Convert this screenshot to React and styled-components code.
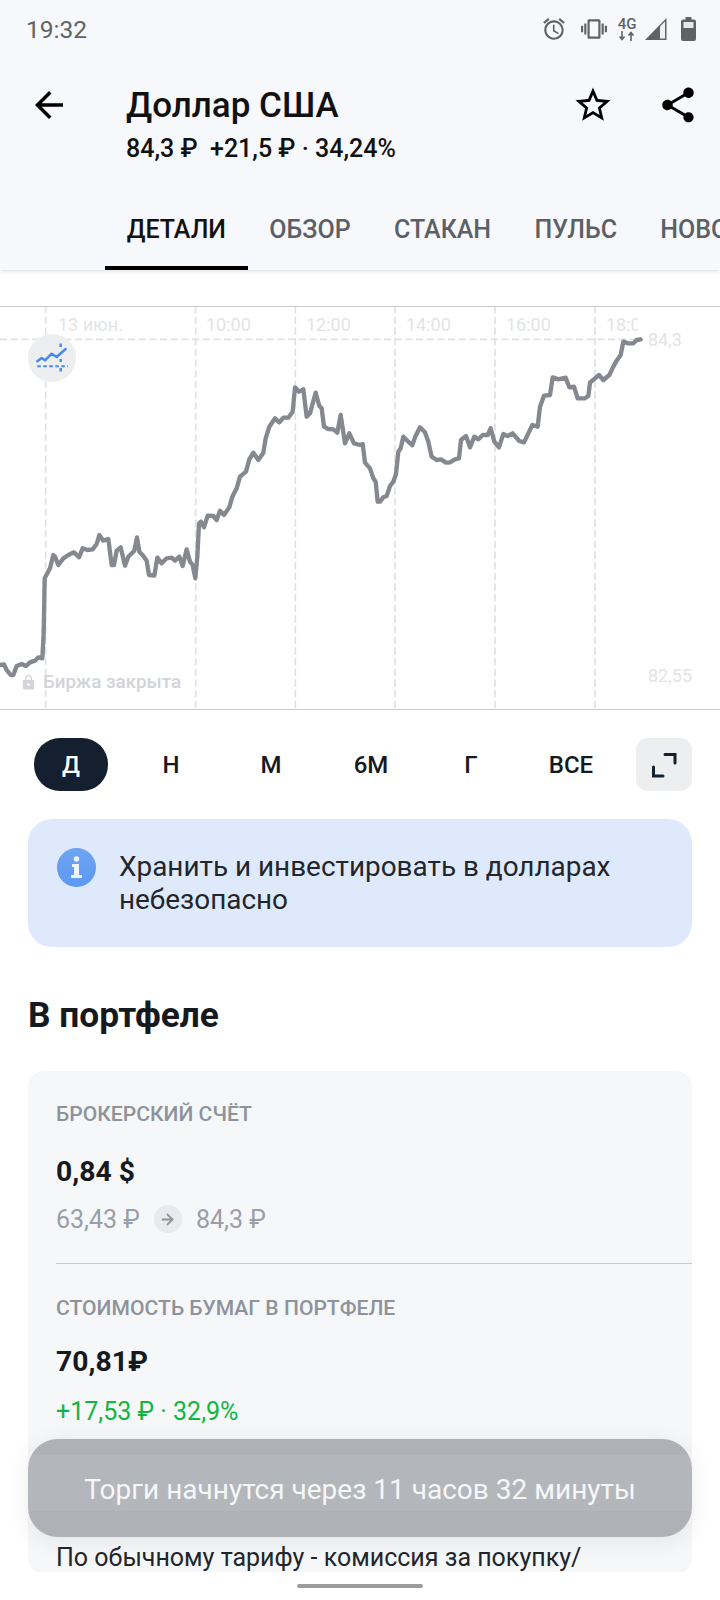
import React from "react";
import styled, { createGlobalStyle } from "styled-components";
import { MdArrowBack, MdStarBorder, MdShare, MdAccessAlarm, MdVibration, MdLock } from "react-icons/md";
import { ArrowRight } from "lucide-react";

const GlobalStyle = createGlobalStyle`
  html, body {
    margin: 0;
    padding: 0;
    background: #fff;
  }
  body {
    font-family: Roboto, "Noto Sans", sans-serif;
    color: #16191d;
  }
`;

const Page = styled.div`
  position: relative;
  display: flex;
  flex-direction: column;
  width: 720px;
  height: 1600px;
  overflow: hidden;
  background: #fff;
`;

const Header = styled.header`
  flex: none;
  height: 270px;
  background: #f6f8fb;
  box-shadow: 0 1px 4px rgba(0, 0, 0, 0.14);
`;

const StatusBar = styled.div`
  display: flex;
  align-items: center;
  justify-content: space-between;
  height: 58px;
  padding: 0 24px 0 26px;
  color: #5f6368;
`;

const Time = styled.span`
  font-size: 24.5px;
`;

const StatusIcons = styled.div`
  display: flex;
  align-items: center;
  height: 24px;
`;

const NetworkLabel = styled.div`
  display: flex;
  flex-direction: column;
  align-items: center;
  width: 20px;
  margin: 0 8px 0 10px;
  font-size: 15px;
  line-height: 14px;
  font-weight: 500;
  svg {
    display: block;
  }
`;

const BatterySlot = styled.div`
  display: flex;
  margin-left: 14px;
`;

const VibrateSlot = styled.div`
  display: flex;
  margin-left: 14px;
`;

const TitleBar = styled.div`
  display: flex;
  align-items: flex-start;
  height: 132px;
  padding: 26px 21px 0 28px;
  box-sizing: border-box;
`;

const IconButton = styled.div`
  display: flex;
  flex: none;
  align-items: center;
  justify-content: center;
  width: 42px;
  height: 42px;
  color: #000;
`;

const TitleBlock = styled.div`
  flex: 1;
  margin-left: 56px;
  padding-top: 1px;
`;

const Title = styled.div`
  font-size: 35px;
  line-height: 42px;
  font-weight: 500;
  color: #111;
`;

const Subtitle = styled.div`
  margin-top: 6px;
  font-size: 25px;
  line-height: 32px;
  font-weight: 500;
  color: #111;
  white-space: pre;
`;

const RightActions = styled.div`
  display: flex;
  gap: 43px;
`;

const Tabs = styled.nav`
  display: flex;
  height: 80px;
  padding-left: 105px;
  overflow: hidden;
`;

const Tab = styled.div`
  flex: none;
  display: flex;
  align-items: center;
  padding: 3px 21.7px 0;
  box-sizing: border-box;
  font-size: 25px;
  font-weight: 500;
  color: ${(p) => (p.$active ? "#111" : "#5b6067")};
  border-bottom: 4px solid ${(p) => (p.$active ? "#000" : "transparent")};
`;

const Content = styled.main`
  flex: 1;
  min-height: 0;
  overflow: hidden;
`;

const Chart = styled.section`
  position: relative;
  height: 404px;
  margin-top: 36px;
  overflow: hidden;
  svg.plot {
    position: absolute;
    left: 0;
    top: 0;
  }
`;

const AxisLabel = styled.span`
  position: absolute;
  left: ${(p) => p.$x}px;
  top: ${(p) => p.$y}px;
  max-width: ${(p) => p.$maxWidth || 80}px;
  overflow: hidden;
  font-size: 18px;
  line-height: 22px;
  white-space: nowrap;
  color: #e3e4e6;
`;

const ModeButton = styled.div`
  position: absolute;
  left: 28px;
  top: 28px;
  width: 48px;
  height: 48px;
  border-radius: 50%;
  background: #eceef0;
  svg {
    display: block;
  }
`;

const ClosedNote = styled.div`
  position: absolute;
  left: 20px;
  top: 364px;
  display: flex;
  align-items: center;
  gap: 6px;
  height: 24px;
  font-size: 18.8px;
  font-weight: 500;
  color: #d2d4d8;
`;

const Periods = styled.div`
  display: flex;
  align-items: center;
  height: 53px;
  margin-top: 28px;
  padding-left: 21px;
`;

const PeriodCell = styled.div`
  display: flex;
  justify-content: center;
  width: 100px;
`;

const PeriodButton = styled.div`
  display: flex;
  align-items: center;
  justify-content: center;
  width: 74px;
  height: 53px;
  padding-top: 1px;
  box-sizing: border-box;
  border-radius: 26px;
  font-size: 24px;
  font-weight: 500;
  background: ${(p) => (p.$active ? "#14202f" : "transparent")};
  color: ${(p) => (p.$active ? "#fff" : "#16191d")};
`;

const ExpandButton = styled.div`
  display: flex;
  align-items: center;
  justify-content: center;
  width: 56px;
  height: 53px;
  margin-left: 15px;
  border-radius: 12px;
  background: #eceef0;
`;

const Banner = styled.div`
  display: flex;
  gap: 23px;
  height: 128px;
  margin: 28px 28px 0;
  padding: 29px 29px 0;
  box-sizing: border-box;
  border-radius: 24px;
  background: #dfe9fc;
`;

const BannerText = styled.div`
  margin-top: 2px;
  font-size: 27.9px;
  line-height: 33px;
  white-space: nowrap;
  color: #22262b;
`;

const Heading = styled.h2`
  margin: 48px 28px 36px;
  font-size: 35.3px;
  line-height: 40px;
  font-weight: 700;
  color: #16191d;
`;

const Card = styled.section`
  margin: 0 28px;
  padding-left: 28px;
  border-radius: 16px;
  background: #f5f7f9;
`;

const Block = styled.div`
  padding: ${(p) => p.$top}px 0 ${(p) => p.$bottom}px;
  border-top: ${(p) => (p.$divided ? "1px solid #c9cbd0" : "none")};
`;

const Caption = styled.div`
  font-size: 21.1px;
  line-height: 26px;
  font-weight: 500;
  color: #8e939b;
`;

const Amount = styled.div`
  margin-top: ${(p) => p.$gap}px;
  font-size: 28.3px;
  line-height: 34px;
  font-weight: 700;
  color: #16191d;
`;

const PriceRow = styled.div`
  display: flex;
  align-items: center;
  height: 28px;
  margin-top: 16px;
  font-size: 25px;
  color: #9a9ea6;
`;

const ArrowBadge = styled.span`
  display: flex;
  align-items: center;
  justify-content: center;
  width: 28px;
  height: 28px;
  margin: 0 14px 0 14px;
  border-radius: 50%;
  background: #e8eaed;
  color: #8e939b;
`;

const Profit = styled.div`
  margin-top: 17px;
  font-size: 25px;
  line-height: 32px;
  color: #11b53f;
`;

const Description = styled.div`
  margin-top: 113px;
  font-size: 25px;
  line-height: 33px;
  white-space: nowrap;
  color: #22262b;
`;

const HomeBar = styled.div`
  flex: none;
  display: flex;
  align-items: center;
  justify-content: center;
  height: 28px;
  background: #fff;
`;

const HomeIndicator = styled.div`
  width: 126px;
  height: 4px;
  border-radius: 2px;
  background: #9c9c9c;
`;

const Toast = styled.div`
  position: absolute;
  left: 28px;
  right: 28px;
  bottom: 63px;
  display: flex;
  align-items: center;
  justify-content: center;
  height: 98px;
  padding-top: 3px;
  box-sizing: border-box;
  border-radius: 30px;
  background: linear-gradient(#aeb1b6 16px, #b3b6bb 16px, #b3b6bb 72px, #aeb1b6 72px);
  box-shadow: 0 4px 24px rgba(0, 0, 0, 0.08);
  font-size: 28px;
  color: #f6f7f8;
`;

const gridX = [137, 587, 886, 1185, 1485, 1785];

const linePoints = [
  [0, 1095], [12, 1093], [20, 1110], [32, 1125], [40, 1125], [50, 1098], [65, 1092], [78, 1098], [90, 1087],
  [105, 1082], [115, 1072], [127, 1075], [131, 1000], [134, 835], [150, 805], [160, 765], [165, 770], [175, 795],
  [190, 775], [205, 765], [222, 757], [237, 772], [248, 745], [262, 750], [278, 748], [290, 732], [298, 705],
  [310, 722], [325, 717], [335, 795], [342, 795], [350, 752], [362, 742], [375, 797], [385, 770], [403, 752],
  [411, 712], [418, 755], [430, 768], [440, 782], [447, 825], [463, 827], [472, 773], [485, 790], [500, 775],
  [515, 773], [525, 782], [538, 770], [548, 798], [560, 748], [570, 785], [578, 795], [586, 835], [592, 770],
  [597, 670], [603, 665], [612, 682], [623, 647], [640, 648], [650, 660], [660, 632], [672, 645], [688, 622],
  [697, 590], [710, 565], [720, 530], [738, 515], [748, 478], [760, 458], [775, 480], [790, 458], [797, 415],
  [808, 380], [825, 355], [838, 367], [850, 353], [865, 353], [878, 335], [885, 262], [897, 275], [910, 268],
  [920, 350], [930, 340], [947, 278], [958, 318], [965, 325], [972, 380], [985, 387], [1000, 388], [1012, 398],
  [1022, 345], [1035, 430], [1048, 400], [1062, 430], [1080, 435], [1088, 432], [1095, 488], [1110, 505],
  [1120, 535], [1127, 545], [1133, 605], [1140, 605], [1150, 592], [1160, 588], [1170, 558], [1180, 545],
  [1188, 522], [1195, 455], [1202, 445], [1210, 410], [1225, 425], [1237, 436], [1245, 412], [1260, 382],
  [1275, 397], [1285, 425], [1295, 470], [1310, 480], [1323, 478], [1338, 488], [1350, 487], [1365, 478],
  [1377, 475], [1383, 420], [1398, 408], [1410, 442], [1423, 410], [1435, 418], [1448, 405], [1463, 405],
  [1472, 385], [1483, 425], [1497, 442], [1510, 402], [1523, 408], [1538, 400], [1558, 423], [1572, 427],
  [1585, 400], [1597, 375], [1613, 380], [1620, 320], [1632, 287], [1650, 285], [1658, 232], [1675, 238],
  [1697, 233], [1708, 262], [1722, 260], [1733, 295], [1755, 295], [1765, 288], [1770, 248], [1785, 235],
  [1797, 225], [1810, 240], [1828, 225], [1840, 200], [1850, 182], [1862, 165], [1870, 125], [1885, 130],
  [1900, 130], [1910, 120], [1922, 118],
];

const timeLabels = [
  { text: "13 июн.", x: 58 },
  { text: "10:00", x: 206 },
  { text: "12:00", x: 306 },
  { text: "14:00", x: 406 },
  { text: "16:00", x: 506 },
  { text: "18:00", x: 606, maxWidth: 32 },
];

const tabs = ["ДЕТАЛИ", "ОБЗОР", "СТАКАН", "ПУЛЬС", "НОВОСТИ"];
const periods = ["Д", "Н", "М", "6М", "Г", "ВСЕ"];

function NetworkArrows() {
  return (
    <svg width="20" height="10" viewBox="0 0 20 10" fill="none" stroke="currentColor" strokeWidth="1.6">
      <path d="M5 0v8M2.5 5.5L5 8.5l2.5-3" />
      <path d="M14 10V2M11.5 4.5L14 1.5l2.5 3" />
    </svg>
  );
}

function SignalIcon() {
  return (
    <svg width="22" height="22" viewBox="0 0 22 22">
      <path d="M21.5 0V22H0z" fill="currentColor" />
      <path d="M20 3.500V20.500H15V8.500z" fill="#f0f1f3" />
    </svg>
  );
}

function BatteryIcon() {
  return (
    <svg width="15" height="24" viewBox="0 0 15 24" fill="currentColor">
      <path d="M4.500 0h6v2.500h2.500a2 2 0 0 1 2 2V22a2 2 0 0 1-2 2H2a2 2 0 0 1-2-2V4.500a2 2 0 0 1 2-2h2.500z" />
      <path d="M2.500 5h10v6h-10z" fill="#e6e8ea" />
    </svg>
  );
}

function ChartModeIcon() {
  return (
    <svg width="48" height="48" viewBox="0 0 48 48" fill="none" stroke="#4489ef">
      <path d="M9.300 27.300L13.700 24l3.300 2.300 6.700-6.600 5 3.300 4.300-4 4.700-4" strokeWidth="2.400" strokeLinejoin="round" strokeLinecap="round" />
      <path d="M9.300 32.300H40" strokeWidth="2" strokeDasharray="3.500 2.500" />
      <path d="M32.700 9.500v3.500M32.700 25v3M32.700 34v3.500" strokeWidth="2.400" />
    </svg>
  );
}

function ExpandIcon() {
  return (
    <svg width="26" height="26" viewBox="0 0 26 26" fill="none" stroke="#14202f" strokeWidth="3" strokeLinecap="round">
      <path d="M14 2.500h10V11" />
      <path d="M2.500 15v9H12" />
    </svg>
  );
}

function InfoIcon() {
  return (
    <svg width="39" height="39" viewBox="0 0 39 39" style={{ flex: "none" }}>
      <defs>
        <linearGradient id="infoFill" x1="0" y1="0" x2="0" y2="1">
          <stop offset="0" stopColor="#6ea4f3" />
          <stop offset="1" stopColor="#5c98f2" />
        </linearGradient>
      </defs>
      <circle cx="19.500" cy="19.500" r="19.500" fill="url(#infoFill)" />
      <circle cx="19.500" cy="11" r="2.800" fill="#eef4fe" />
      <path d="M15 16h7v11h3v3H14v-3h3v-8h-2z" fill="#eef4fe" />
    </svg>
  );
}

function PriceChart() {
  const path = linePoints.map((p) => p.join(",")).join(" ");
  return (
    <svg className="plot" width="720" height="404" viewBox="0 18 2160 1212">
      <g fill="none" stroke="#e0e1e3" strokeWidth="5" strokeDasharray="22 10">
        <path d="M0 118H1905" />
        {gridX.map((x) => (
          <path key={x} d={`M${x} 18V1230`} />
        ))}
      </g>
      <path d="M0 19.500H2160M0 1228.500H2160" stroke="#c9c9c9" strokeWidth="3" fill="none" />
      <polyline points={path} fill="none" stroke="#85888f" strokeWidth="13" strokeLinejoin="round" strokeLinecap="round" />
    </svg>
  );
}

export default function App() {
  return (
    <Page>
      <GlobalStyle />
      <Header>
        <StatusBar>
          <Time>19:32</Time>
          <StatusIcons>
            <MdAccessAlarm size={26} />
            <VibrateSlot>
              <MdVibration size={26} />
            </VibrateSlot>
            <NetworkLabel>
              4G
              <NetworkArrows />
            </NetworkLabel>
            <SignalIcon />
            <BatterySlot>
              <BatteryIcon />
            </BatterySlot>
          </StatusIcons>
        </StatusBar>
        <TitleBar>
          <IconButton>
            <MdArrowBack size={42} />
          </IconButton>
          <TitleBlock>
            <Title>Доллар США</Title>
            <Subtitle>84,3 ₽  +21,5 ₽ · 34,24%</Subtitle>
          </TitleBlock>
          <RightActions>
            <IconButton>
              <MdStarBorder size={42} />
            </IconButton>
            <IconButton>
              <MdShare size={42} />
            </IconButton>
          </RightActions>
        </TitleBar>
        <Tabs>
          {tabs.map((t, i) => (
            <Tab key={t} $active={i === 0}>
              {t}
            </Tab>
          ))}
        </Tabs>
      </Header>
      <Content>
        <Chart>
          <PriceChart />
          {timeLabels.map((l) => (
            <AxisLabel key={l.text} $x={l.x} $y={8} $maxWidth={l.maxWidth}>
              {l.text}
            </AxisLabel>
          ))}
          <AxisLabel $x={648} $y={23}>84,3</AxisLabel>
          <AxisLabel $x={648} $y={359}>82,55</AxisLabel>
          <ModeButton>
            <ChartModeIcon />
          </ModeButton>
          <ClosedNote>
            <MdLock size={17} />
            Биржа закрыта
          </ClosedNote>
        </Chart>
        <Periods>
          {periods.map((p, i) => (
            <PeriodCell key={p}>
              <PeriodButton $active={i === 0}>{p}</PeriodButton>
            </PeriodCell>
          ))}
          <ExpandButton>
            <ExpandIcon />
          </ExpandButton>
        </Periods>
        <Banner>
          <InfoIcon />
          <BannerText>
            Хранить и инвестировать в долларах
            <br />
            небезопасно
          </BannerText>
        </Banner>
        <Heading>В портфеле</Heading>
        <Card>
          <Block $top={30} $bottom={30}>
            <Caption>БРОКЕРСКИЙ СЧЁТ</Caption>
            <Amount $gap={28}>0,84 $</Amount>
            <PriceRow>
              63,43 ₽
              <ArrowBadge>
                <ArrowRight size={17} strokeWidth={2.5} />
              </ArrowBadge>
              84,3 ₽
            </PriceRow>
          </Block>
          <Block $divided $top={31} $bottom={0}>
            <Caption>СТОИМОСТЬ БУМАГ В ПОРТФЕЛЕ</Caption>
            <Amount $gap={24}>70,81₽</Amount>
            <Profit>+17,53 ₽ · 32,9%</Profit>
            <Description>По обычному тарифу - комиссия за покупку/</Description>
          </Block>
        </Card>
      </Content>
      <HomeBar>
        <HomeIndicator />
      </HomeBar>
      <Toast>Торги начнутся через 11 часов 32 минуты</Toast>
    </Page>
  );
}
